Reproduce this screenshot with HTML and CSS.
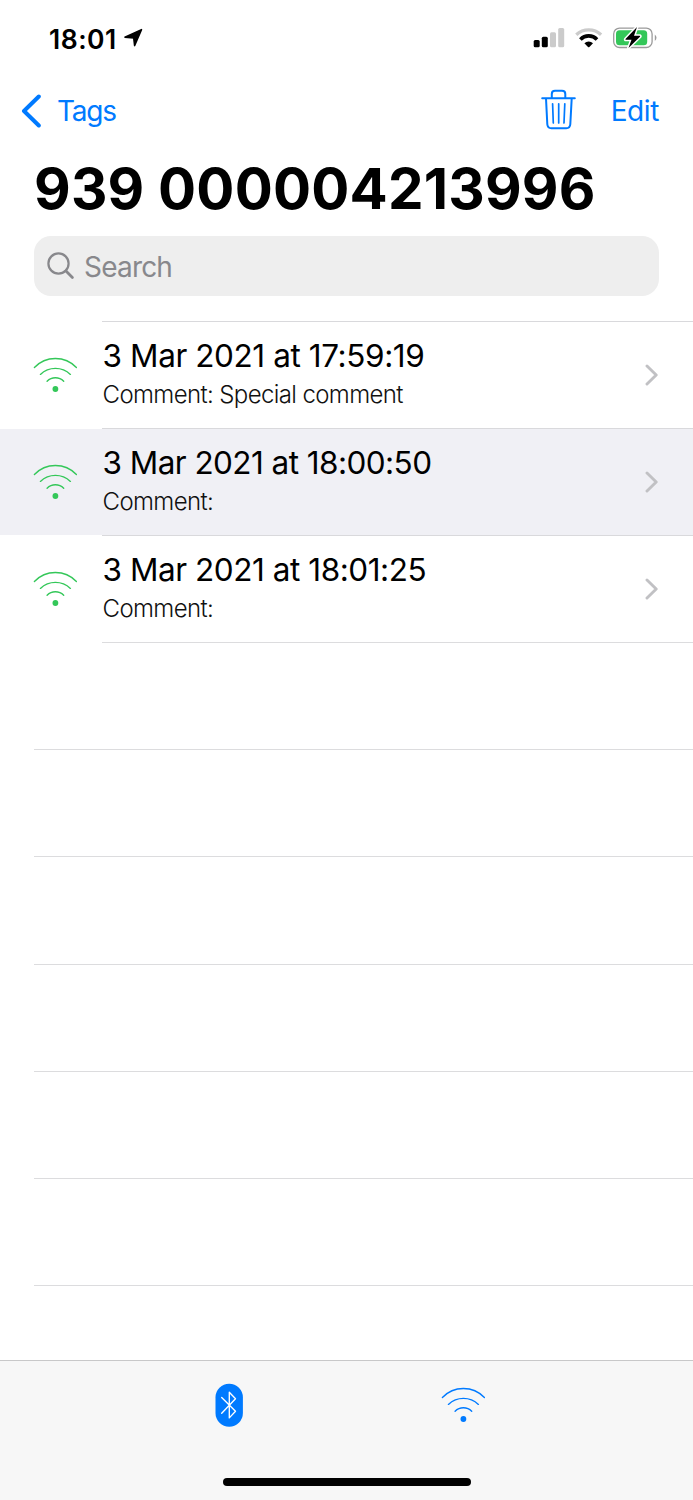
FILE: index.html
```
<!DOCTYPE html>
<html lang="en">
<head>
<meta charset="utf-8">
<title>939 000004213996</title>
<link rel="stylesheet" href="styles.css">
</head>
<body>
<svg width="0" height="0" class="defs">
  <symbol id="wave" viewBox="-0.4 0 44 36">
    <path d="M1 10.5A29 29 0 0 1 43 10.5M7 17.4A21.7 21.7 0 0 1 37 17.4M13.7 24.2A11.6 11.6 0 0 1 30.3 24.2" fill="none" stroke="currentColor" stroke-width="1.35" stroke-linecap="round"/>
    <circle cx="22" cy="32" r="2.9" fill="currentColor"/>
  </symbol>
  <symbol id="chevron" viewBox="0 0 14 22">
    <path d="M2 2L11.2 11L2 20" fill="none" stroke="currentColor" stroke-width="2.9" stroke-linecap="round" stroke-linejoin="round"/>
  </symbol>
</svg>
<div class="screen">
  <header class="status">
    <span class="time">18:01</span>
    <svg class="location" viewBox="0 0 20 20"><path d="M17.5 1.6L10.6 17.6L9.7 10.1L.9 9.2Z" stroke="#000" stroke-width="1.5" stroke-linejoin="round"/></svg>
    <svg class="signals" viewBox="0 0 124 24">
      <rect x="0.7" y="13" width="6" height="7.3" rx="1.5"/>
      <rect x="8.8" y="9.8" width="6" height="10.5" rx="1.5"/>
      <rect x="17" y="5.3" width="6" height="15" rx="1.5" fill="#cbcbcb"/>
      <rect x="25.2" y="1" width="6" height="19.3" rx="1.5" fill="#cbcbcb"/>
      <path d="M43.3 7.7A18.2 18.2 0 0 1 68.1 7.7" fill="none" stroke="#cbcbcb" stroke-width="3.3"/>
      <path d="M47.4 12.4A11.5 11.5 0 0 1 64 12.4" fill="none" stroke="#000" stroke-width="3.6"/>
      <path d="M51.4 16.2A6.2 6.2 0 0 1 60 16.2L56.4 20Q55.7 20.6 55 20Z"/>
      <rect x="80.7" y="1.1" width="38.4" height="19.4" rx="5.8" fill="#fff" stroke="#9b9b9b" stroke-width="1.3"/>
      <rect x="83" y="3.3" width="31.2" height="15" rx="3.5" fill="#34c759"/>
      <path d="M121.8 7.5Q123.5 8.7 123.5 10.7T121.8 13.9Z" fill="#9b9b9b"/>
      <path d="M104 0L92.5 12Q92 12.8 93 12.8H98.5L95.5 21L107 9.8Q107.6 8.8 106.6 8.8H101Z" stroke="#fff" stroke-width="3" stroke-linejoin="round" paint-order="stroke"/>
    </svg>
  </header>
  <nav class="nav">
    <a class="back"><svg viewBox="0 0 20 34"><path d="M17.8 2.5L3 17L17.8 31.5" fill="none" stroke="currentColor" stroke-width="4" stroke-linecap="round" stroke-linejoin="round"/></svg><span class="tags">Tags</span></a>
    <svg class="trash" viewBox="0 0 36 42" fill="none" stroke="currentColor" stroke-width="2" stroke-linecap="round" stroke-linejoin="round">
      <path d="M1.2 9.2H33.8M10.8 9V5Q10.8 1.8 14 1.8H21Q24.3 1.8 24.3 5V9M5 9.5L6.3 35.3Q6.6 39.3 10.4 39.3H25.2Q29 39.3 29.3 35.3L30.7 9.5"/>
      <path d="M11.6 14.8L12.3 34M17.7 14.8V34M23.8 14.8L23 34" stroke-width="1.7"/>
    </svg>
    <a class="edit">Edit</a>
  </nav>
  <h1 class="title">939 000004213996</h1>
  <div class="search">
    <svg viewBox="0 0 28 28" fill="none" stroke="currentColor" stroke-width="2.2" stroke-linecap="round"><circle cx="11.5" cy="11.5" r="10.1"/><path d="M19 19L25.4 25.4" stroke-width="2.8"/></svg>
    <span>Search</span>
  </div>
  <main class="list">
    <div class="row"><svg class="wave"><use href="#wave"/></svg><div class="body"><div class="date d1">3 Mar 2021 at 17:59:19</div><div class="comment">Comment: Special comment</div></div><svg class="chevron"><use href="#chevron"/></svg></div>
    <div class="row selected"><svg class="wave"><use href="#wave"/></svg><div class="body"><div class="date d2">3 Mar 2021 at 18:00:50</div><div class="comment">Comment:</div></div><svg class="chevron"><use href="#chevron"/></svg></div>
    <div class="row"><svg class="wave"><use href="#wave"/></svg><div class="body"><div class="date d3">3 Mar 2021 at 18:01:25</div><div class="comment">Comment:</div></div><svg class="chevron"><use href="#chevron"/></svg></div>
    <div class="empty first"></div><div class="empty"></div><div class="empty"></div><div class="empty"></div><div class="empty"></div><div class="empty"></div><div class="empty"></div>
  </main>
  <footer class="tabs">
    <div class="tabrow">
      <svg class="bluetooth" viewBox="0 0 28 44"><rect x=".5" y=".8" width="27.4" height="43" rx="13.7" fill="#007aff"/><path d="M6.7 14.5L20.5 28.2L14.3 34.9V9.2L20.5 15.8L6.7 30.2" fill="none" stroke="#fff" stroke-width="1.35" stroke-linecap="round" stroke-linejoin="round"/></svg>
      <svg class="wave"><use href="#wave"/></svg>
    </div>
    <div class="home"></div>
  </footer>
</div>
</body>
</html>
```
FILE: styles.css
```
* { box-sizing: border-box; }
body { margin: 0; background: #fff; color: #000; font-family: Inter, "Liberation Sans", sans-serif; }
.defs { display: none; }
.screen { width: 693px; height: 1500px; display: flex; flex-direction: column; overflow: hidden; }
.status { height: 75px; flex: none; display: flex; align-items: flex-start; padding: 27px 36px 0 49px; }
.time { font-size: 26.5px; font-weight: 600; line-height: 24px; width: 75px; white-space: nowrap; letter-spacing: .5px; }
.location { width: 20px; height: 20px; margin-top: 1px; }
.signals { width: 124px; height: 24px; margin-left: auto; }
.nav { height: 70px; flex: none; display: flex; align-items: center; padding: 2px 34px 0 21px; color: #007aff; font-size: 28px; }
.back { display: flex; align-items: center; gap: 16px; }
.back svg { width: 20px; height: 34px; }
.tags { letter-spacing: -1.2px; }
.trash { width: 36px; height: 42px; margin-left: auto; margin-right: 34px; margin-top: -2px; }
.edit { white-space: nowrap; letter-spacing: -.4px; }
.title { flex: none; height: 91px; margin: 0; padding: 9px 0 0 34px; font-size: 56.5px; line-height: 69px; font-weight: 700; white-space: nowrap; letter-spacing: .2px; }
.search { flex: none; height: 60px; margin: 0 34px; border-radius: 17px; background: #eee; color: #88888c; display: flex; align-items: center; gap: 9px; padding: 1px 13px 0; font-size: 28px; letter-spacing: -.8px; }
.search svg { width: 28px; height: 28px; margin-top: -1px; }
.list { flex: 1; padding-top: 25px; min-height: 0; overflow: hidden; }
.row { height: 107px; display: flex; background: #fff; padding-left: 33px; position: relative; }
.selected { background: linear-gradient(#f0f0f5, #f0f0f5) 0 1px no-repeat; }
.wave { width: 44px; height: 36px; color: #34c759; }
.row .wave { margin-top: 36px; }
.body { flex: 1; margin-left: 25px; border-top: 1px solid #d9d9dc; padding: 13px 0 0 .6px; white-space: nowrap; }
.date { font-size: 31.5px; line-height: 41px; }
.d1 { letter-spacing: -.41px; }
.d2 { letter-spacing: -.56px; }
.d3 { letter-spacing: -.45px; }
.comment { font-size: 24px; line-height: 32px; margin-top: 3px; color: #111; font-weight: 300; letter-spacing: -.62px; }
.chevron { position: absolute; right: 34px; top: 43px; width: 14px; height: 22px; color: #c1c1c4; }
.empty { height: 107.2px; margin-left: 34px; border-top: 1px solid #dcdcde; }
.empty.first { margin-left: 102px; }
.tabs { flex: none; height: 140px; background: #f7f7f7; border-top: 1px solid #c8c8c9; }
.tabrow { display: flex; height: 120px; padding: 22px 0 0 215px; }
.bluetooth { width: 28px; height: 44px; }
.tabs .wave { color: #007aff; margin-left: 198px; margin-top: 4.4px; }
.home { width: 248px; height: 8px; border-radius: 4px; background: #000; margin: -3px auto 0; }
```
